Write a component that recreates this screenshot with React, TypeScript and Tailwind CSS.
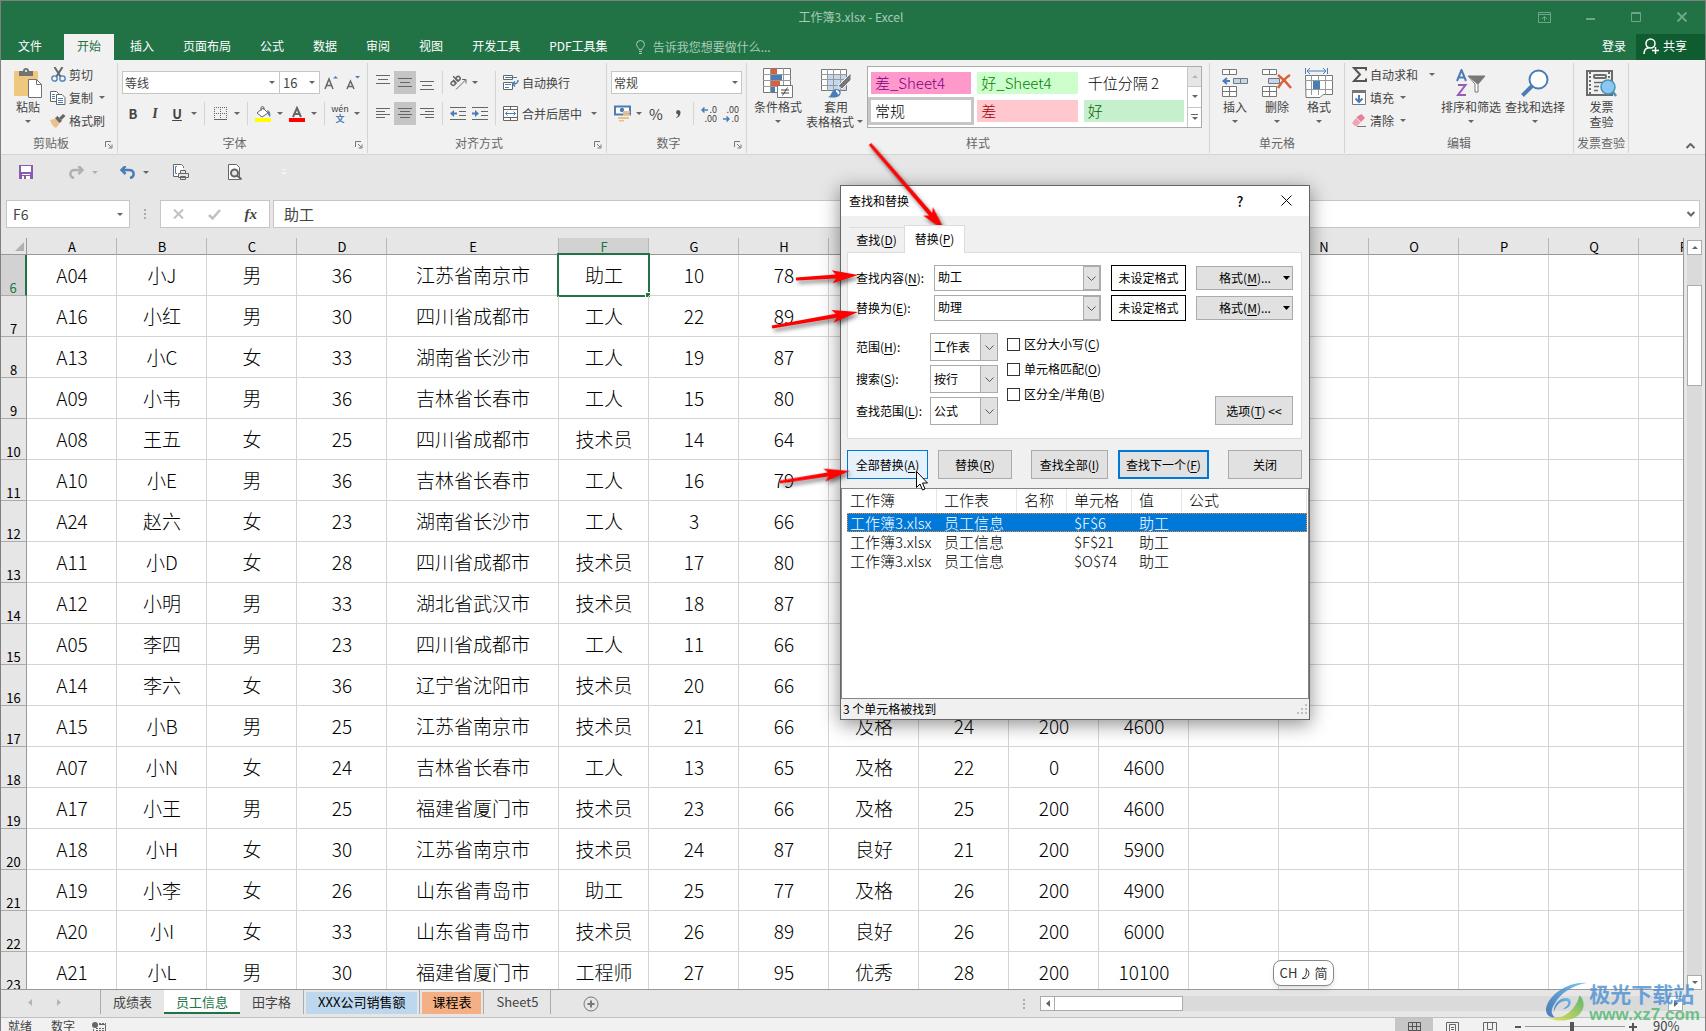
import { useState } from "react";
import type { ReactNode } from "react";

const MENU_TABS = [
  "开始",
  "插入",
  "页面布局",
  "公式",
  "数据",
  "审阅",
  "视图",
  "开发工具",
  "PDF工具集",
];

const COLUMNS = [
  "A", "B", "C", "D", "E", "F", "G", "H", "I",
  "J", "K", "L", "M", "N", "O", "P", "Q", "R",
];

const FIRST_ROW = 6;

const ROWS: string[][] = [
  ["A04", "小J", "男", "36", "江苏省南京市", "助工", "10", "78"],
  ["A16", "小红", "男", "30", "四川省成都市", "工人", "22", "89"],
  ["A13", "小C", "女", "33", "湖南省长沙市", "工人", "19", "87"],
  ["A09", "小韦", "男", "36", "吉林省长春市", "工人", "15", "80"],
  ["A08", "王五", "女", "25", "四川省成都市", "技术员", "14", "64"],
  ["A10", "小E", "男", "36", "吉林省长春市", "工人", "16", "79"],
  ["A24", "赵六", "女", "23", "湖南省长沙市", "工人", "3", "66"],
  ["A11", "小D", "女", "28", "四川省成都市", "技术员", "17", "80"],
  ["A12", "小明", "男", "33", "湖北省武汉市", "技术员", "18", "87"],
  ["A05", "李四", "男", "23", "四川省成都市", "工人", "11", "66"],
  ["A14", "李六", "女", "36", "辽宁省沈阳市", "技术员", "20", "66"],
  ["A15", "小B", "男", "25", "江苏省南京市", "技术员", "21", "66", "及格", "24", "200", "4600"],
  ["A07", "小N", "女", "24", "吉林省长春市", "工人", "13", "65", "及格", "22", "0", "4600"],
  ["A17", "小王", "男", "25", "福建省厦门市", "技术员", "23", "66", "及格", "25", "200", "4600"],
  ["A18", "小H", "女", "30", "江苏省南京市", "技术员", "24", "87", "良好", "21", "200", "5900"],
  ["A19", "小李", "女", "26", "山东省青岛市", "助工", "25", "77", "及格", "26", "200", "4900"],
  ["A20", "小I", "女", "33", "山东省青岛市", "技术员", "26", "89", "良好", "26", "200", "6000"],
  ["A21", "小L", "男", "30", "福建省厦门市", "工程师", "27", "95", "优秀", "28", "200", "10100"],
];

const RESULTS = [
  ["工作簿3.xlsx", "员工信息", "", "$F$6", "助工", ""],
  ["工作簿3.xlsx", "员工信息", "", "$F$21", "助工", ""],
  ["工作簿3.xlsx", "员工信息", "", "$O$74", "助工", ""],
];

const RESULT_COLUMNS = [
  { name: "工作簿", width: "w-[90px]" },
  { name: "工作表", width: "w-20" },
  { name: "名称", width: "w-[50px]" },
  { name: "单元格", width: "w-[65px]" },
  { name: "值", width: "w-[50px]" },
  { name: "公式", width: "w-[125px]" },
];

// Small shared pieces

function Caret({ className = "text-[#666]" }: { className?: string }) {
  return (
    <span className={`flex w-3 shrink-0 justify-center ${className}`}>
      <svg width="6" height="3" viewBox="0 0 6 3" fill="currentColor">
        <path d="M0 0h6L3 3z" />
      </svg>
    </span>
  );
}

function Sep() {
  return <span className="mx-1 w-px shrink-0 self-stretch bg-[#d4d4d4]" />;
}

function Tool({
  label,
  active,
  children,
}: {
  label: string;
  active?: boolean;
  children: ReactNode;
}) {
  return (
    <button
      type="button"
      aria-label={label}
      className={`flex h-[23px] w-[22px] shrink-0 items-center justify-center ${active ? "bg-[#c5c5c5]" : ""}`}
    >
      {children}
    </button>
  );
}

function SmallButton({
  icon,
  label,
  caret,
}: {
  icon: ReactNode;
  label: string;
  caret?: boolean;
}) {
  return (
    <button type="button" className="flex h-[23px] items-center gap-[3px]">
      <span className="flex w-4 justify-center">{icon}</span>
      <span>{label}</span>
      {caret && <Caret />}
    </button>
  );
}

function BigButton({
  icon,
  lines,
  width,
  caret = "below",
}: {
  icon: ReactNode;
  lines: string[];
  width: string;
  caret?: "below" | "inline" | "none";
}) {
  return (
    <button
      type="button"
      className={`flex shrink-0 flex-col items-center pt-1 leading-[15px] whitespace-nowrap ${width}`}
    >
      <span className="flex h-8 items-center">{icon}</span>
      {lines.map((line, i) => (
        <span key={line} className="flex items-center">
          {line}
          {caret === "inline" && i === lines.length - 1 && <Caret />}
        </span>
      ))}
      {caret === "below" && (
        <span className="flex h-[15px] items-center">
          <Caret />
        </span>
      )}
    </button>
  );
}

function Group({
  label,
  width,
  launcher,
  children,
}: {
  label: string;
  width: string;
  launcher?: boolean;
  children: ReactNode;
}) {
  return (
    <section className={`flex shrink-0 flex-col border-r border-[#d4d4d4] ${width}`}>
      <div className="flex h-[70px]">{children}</div>
      <div className="flex h-5 items-center text-[#666]">
        <span className="flex-1 text-center">{label}</span>
        {launcher && (
          <button type="button" aria-label={`${label}设置`} className="w-4 pt-1 pl-1">
            <svg width="8" height="8" viewBox="0 0 8 8" fill="none" stroke="#777">
              <path d="M.5 6V.5H6M3 3l3 3M7 3.500V7H3.500" />
            </svg>
          </button>
        )}
      </div>
    </section>
  );
}

function Lines({ rows }: { rows: [number, number, number][] }) {
  return (
    <svg width="14" height="15" viewBox="0 0 14 15" stroke="#666">
      {rows.map(([y, x1, x2]) => (
        <path key={y} d={`M${x1} ${y}.5H${x2}`} />
      ))}
    </svg>
  );
}

// Icons

function PasteIcon() {
  return (
    <svg width="28" height="30" viewBox="0 0 28 30">
      <rect y="3" width="24" height="25" rx="1" fill="#edc87e" />
      <path d="M5 3h4a3 3 0 0 1 6 0h4v5H5z" fill="#737373" />
      <circle cx="12" cy="3" r="1" fill="#fff" />
      <path d="M14.500 11.500h8l5 5v13h-13z" fill="#fff" stroke="#737373" />
      <path d="M22.500 11.500v5h5" fill="none" stroke="#737373" />
    </svg>
  );
}

function CutIcon() {
  return (
    <svg width="15" height="15" viewBox="0 0 15 15" fill="none">
      <path d="M3.500 0l6 9.500M11.500 0l-6 9.500" stroke="#666" strokeWidth="2" />
      <circle cx="3.500" cy="11.500" r="2.700" stroke="#4a7db5" strokeWidth="1.300" />
      <circle cx="11.500" cy="11.500" r="2.700" stroke="#4a7db5" strokeWidth="1.300" />
    </svg>
  );
}

function CopyIcon() {
  return (
    <svg width="16" height="14" viewBox="0 0 16 14" fill="#fff" stroke="#666">
      <path d="M.5.5h6l2 2v8h-8z" />
      <path d="M6.500 3.500h5.500l3 3v7H6.500z" />
      <path d="M2 3.500h3M2 5.500h3M2 7.500h3M8 7.500h5M8 9.500h5M8 11.500h5" stroke="#4a7db5" />
    </svg>
  );
}

function BrushIcon() {
  return (
    <svg width="16" height="14" viewBox="0 0 16 14">
      <path d="M0 6l6-1.500L10 9 6 14C4 13 1 10 0 6z" fill="#edc087" />
      <path d="M5 4l2.500-2L12 7 9.500 9z" fill="#666" />
      <path d="M9 4l4-4 2.500 2-4 4z" fill="#666" />
    </svg>
  );
}

function BordersIcon() {
  return (
    <svg width="13" height="13" viewBox="0 0 13 13" fill="none" stroke="#666">
      <path d="M.5 0v11M6.500 0v11M12.500 0v11M0 .5h13M0 6.500h13" strokeDasharray="1 1" />
      <path d="M0 12.500h13" />
    </svg>
  );
}

function FillIcon() {
  return (
    <svg width="16" height="16" viewBox="0 0 16 16">
      <path d="M2 7l6-5 5 5-6 4z" fill="#fff" stroke="#666" />
      <path d="M6 5V2a1.500 1.500 0 0 1 3 0v2" fill="none" stroke="#666" />
      <path d="M12 4c3 1 4 4 3 7-1-1-2-2-2-4z" fill="#4a7db5" />
      <path d="M0 12h16v4H0z" fill="#ff0" />
    </svg>
  );
}

function OrientationIcon() {
  return (
    <svg width="17" height="15" viewBox="0 0 17 15" fill="none" stroke="#666">
      <g transform="rotate(-45 6 7)" strokeWidth="1.500">
        <circle cx="3" cy="6" r="2" />
        <path d="M5.500 3.500v5M8 1v7.500" />
        <circle cx="10" cy="6" r="2" />
      </g>
      <path d="M6 14.500L15.500 5M12 4.500h4v4" />
    </svg>
  );
}

function IndentIcon({ right }: { right?: boolean }) {
  return (
    <svg width="16" height="14" viewBox="0 0 16 14" stroke="#666">
      <path d="M0 .5h16M9 4.500h7M9 8.500h7M0 12.500h16" />
      {right ? (
        <path d="M0 5.500h3V3l4 3.500L3 10V7.500H0z" fill="#4a7db5" stroke="none" />
      ) : (
        <path d="M7 5.500H4V3L0 6.500 4 10V7.500h3z" fill="#4a7db5" stroke="none" />
      )}
    </svg>
  );
}

function WrapIcon() {
  return (
    <svg width="16" height="16" viewBox="0 0 16 16" fill="none" stroke="#666">
      <path d="M.5.5h9v4h-9zM.5 7.500h9v7h-9z" fill="#fff" />
      <path d="M2 2.500h12M2 9.500h6M2 12.500h4" stroke="#4a7db5" />
      <path d="M15 5c0 3-1 4-5 4M12 6.500L9.500 9l2.500 2.500" stroke="#4a7db5" strokeWidth="1.500" />
    </svg>
  );
}

function MergeIcon() {
  return (
    <svg width="15" height="15" viewBox="0 0 15 15" fill="#fff" stroke="#666">
      <path d="M.5.5h14v14H.5zM0 3.500h15M0 11.500h15M7.500 0v3.500M7.500 11.500V15" />
      <path d="M2.500 7.500h10M4.500 5.500l-2 2 2 2M10.500 5.500l2 2-2 2" fill="none" stroke="#4a7db5" />
    </svg>
  );
}

function MoneyIcon() {
  return (
    <svg width="17" height="17" viewBox="0 0 17 17">
      <path d="M1 1.500h15v8H1z" fill="#fff" stroke="#4a7db5" strokeWidth="2" />
      <circle cx="8" cy="5" r="2.200" fill="#4a7db5" />
      <path d="M9 6h7v2H9zM9 9h7v2H9zM4 12h7v2H4zM10 12h5v2h-5zM5 15h5v1.500H5z" fill="#edc087" />
    </svg>
  );
}

function DecimalIcon({ more }: { more?: boolean }) {
  return (
    <span className="relative flex w-4 flex-col text-right text-[9px] leading-[9px]">
      <span>{more ? ".0" : ".00"}</span>
      <span>{more ? ".00" : ".0"}</span>
      <svg width="7" height="18" viewBox="0 0 7 18" className="absolute top-0 left-0" fill="none" stroke="#4a7db5" strokeWidth="1.500">
        {more ? (
          <path d="M7 5H1M3.500 2.500L1 5l2.500 2.500" />
        ) : (
          <path d="M0 14h6M3.500 11.500L6 14l-2.500 2.500" />
        )}
      </svg>
    </span>
  );
}

function ConditionalIcon() {
  return (
    <svg width="30" height="30" viewBox="0 0 30 30">
      <path d="M.5.5h27v24H.5z" fill="#fff" stroke="#777" />
      <path d="M0 6.500h28M0 12.500h28M0 18.500h28M7.500 0v25M20.500 0v25" stroke="#999" fill="none" />
      <path d="M8 1h6v5H8zM8 13h9v5H8z" fill="#d9603b" />
      <path d="M8 7h11v5H8zM8 19h4v5H8z" fill="#4a7db5" />
      <path d="M14.500 17.500h15v12h-15z" fill="#fff" stroke="#777" />
      <path d="M18 22h8M18 25h8M24.500 19.500l-5 8" stroke="#444" fill="none" />
    </svg>
  );
}

function TableStyleIcon() {
  return (
    <svg width="30" height="29" viewBox="0 0 30 29">
      <path d="M.5.5h25v21H.5z" fill="#fff" stroke="#777" />
      <path d="M7 6h18v15H7z" fill="#c3d7ee" />
      <path d="M0 5.500h26M0 10.500h26M0 16.500h26M6.500 0v22M12.500 0v22M19.500 0v22" stroke="#999" fill="none" />
      <path d="M30 4v7l-9 9-4-3z" fill="#777" stroke="#f1f1f1" />
      <path d="M7 28c4-1 3-7 8-8 4 0 6 3 4 6-2 3-8 3-12 2z" fill="#4a7db5" />
      <path d="M15 22c2 0 3 2 2 3" stroke="#fff" fill="none" strokeWidth="2" />
    </svg>
  );
}

function InsertCellsIcon() {
  return (
    <svg width="27" height="29" viewBox="0 0 27 29" fill="#fff" stroke="#777">
      <path d="M.5.500h14v5H.5zM7.500.5v5M.5 17.500h14v10H.5zM7.500 17.500v10M.5 22.500h14" />
      <path d="M11.500 9.500h14v5h-14zM18.500 9.500v5" fill="#c3d7ee" />
      <path d="M8 12H2M5 9l-3.500 3L5 15" fill="none" stroke="#4a7db5" strokeWidth="2" />
    </svg>
  );
}

function DeleteCellsIcon() {
  return (
    <svg width="30" height="29" viewBox="0 0 30 29" fill="#fff" stroke="#777">
      <path d="M.5.500h14v5H.5zM7.500.5v5M.5 17.500h14v10H.5zM7.500 17.500v10M.5 22.500h14" />
      <path d="M6.500 9.500h11v5h-11z" fill="#c3d7ee" />
      <path d="M16 6c4 3 9 8 13 13M28 6c-5 3-9 8-12 13" fill="none" stroke="#d9603b" strokeWidth="2.500" />
    </svg>
  );
}

function FormatCellsIcon() {
  return (
    <svg width="28" height="31" viewBox="0 0 28 31" fill="#fff" stroke="#777">
      <path d="M.5 7.500h27v19H18l-3 3H1z" />
      <path d="M6.500 7v20M20.500 7v20M0 12.500h28M0 21.500h28M13.500 7v5M13.500 22v5" fill="none" stroke="#999" />
      <path d="M8 13h7v8H8z" fill="#4a7db5" stroke="none" />
      <path d="M.5 0v6M22.500 0v6M2 3h19M5 0L2 3l3 3M18 0l3 3-3 3" fill="none" stroke="#4a7db5" />
    </svg>
  );
}

function SigmaIcon() {
  return (
    <svg width="15" height="15" viewBox="0 0 15 15" fill="none" stroke="#555" strokeWidth="2">
      <path d="M14 3.500V1H2l6 6.500L2 14h12v-2.500" />
    </svg>
  );
}

function FillDownIcon() {
  return (
    <svg width="14" height="15" viewBox="0 0 14 15">
      <path d="M.5.500h13v14H.5z" fill="#fff" stroke="#777" />
      <path d="M0 0h14v3H0z" fill="#777" />
      <path d="M7 5v7M3.500 8.500L7 12l3.500-3.500" fill="none" stroke="#4a7db5" strokeWidth="2" />
    </svg>
  );
}

function EraserIcon() {
  return (
    <svg width="15" height="13" viewBox="0 0 15 13">
      <path d="M6 2l3.500-2L13 4 9 8 4.500 3.500z" fill="#e87f93" />
      <path d="M4 4l4.500 4.500L5 12H3L0 9z" fill="#f0a3b1" />
      <path d="M5 12.500h9" stroke="#777" />
    </svg>
  );
}

function SortFilterIcon() {
  return (
    <svg width="30" height="28" viewBox="0 0 30 28" fill="none">
      <path d="M1 12L5.500 1 10 12M2.500 8.500h6" stroke="#4a7db5" strokeWidth="2" />
      <path d="M2 16h7.500L2 26h8" stroke="#9a5bb5" strokeWidth="2" />
      <path d="M12 7h17l-7 8v8h-3v-8z" fill="#fff" stroke="#777" />
      <path d="M12 7h17l-7 8h-1z" fill="#777" />
    </svg>
  );
}

function FindIcon() {
  return (
    <svg width="28" height="28" viewBox="0 0 28 28" fill="none" stroke="#4a7db5">
      <circle cx="17.500" cy="10.500" r="9" fill="#fff" strokeWidth="2" />
      <path d="M11 17L1.500 26.500" strokeWidth="4" />
    </svg>
  );
}

function InvoiceIcon() {
  return (
    <svg width="31" height="27" viewBox="0 0 31 27" fill="none" stroke="#6b6b6b">
      <path d="M1 1h25v24H1z" strokeWidth="2" />
      <path d="M4 2v22M23 2v22" strokeDasharray="2 2" strokeWidth="2" />
      <rect x="8" y="5" width="12" height="3" rx="1" strokeWidth="2" />
      <path d="M8 12.500h10M8 16.500h5M8 20.500h4" strokeWidth="1.500" />
      <circle cx="22" cy="17" r="7" fill="#8cc6f5" stroke="#4595b8" strokeWidth="1.500" />
      <path d="M27 22l3 4" stroke="#4595b8" strokeWidth="2.500" />
    </svg>
  );
}

// Top of the window

function TitleBar() {
  return (
    <header className="flex h-[33px] items-center bg-[#217346] pb-px text-[#a8cbb7]">
      <div className="w-[196px]" />
      <h1 className="flex-1 text-center">工作簿3.xlsx - Excel</h1>
      <div className="flex w-[200px] items-center justify-end text-[#6fa688]">
        <button type="button" aria-label="功能区显示选项" className="flex w-[46px] justify-center">
          <svg width="13" height="11" viewBox="0 0 13 11" fill="none" stroke="currentColor">
            <path d="M.5.500h12v10H.5zM0 2.500h13M6.500 9V4.500M4 7l2.500-2.500L9 7" />
          </svg>
        </button>
        <button type="button" aria-label="最小化" className="flex w-[46px] justify-center">
          <svg width="9" height="6" viewBox="0 0 9 6" stroke="currentColor" strokeWidth="2">
            <path d="M0 5h9" />
          </svg>
        </button>
        <button type="button" aria-label="最大化" className="flex w-[46px] justify-center">
          <svg width="10" height="10" viewBox="0 0 10 10" fill="none" stroke="currentColor">
            <path d="M.5.500h9v9h-9zM0 1.500h10" />
          </svg>
        </button>
        <button type="button" aria-label="关闭窗口" className="flex w-[46px] justify-center">
          <svg width="10" height="10" viewBox="0 0 10 10" stroke="currentColor" strokeWidth="2">
            <path d="M.5.500l9 9M9.500.5l-9 9" />
          </svg>
        </button>
      </div>
    </header>
  );
}

function MenuTabs() {
  return (
    <nav className="flex h-[26px] items-stretch gap-[3px] bg-[#217346] pl-1 text-white">
      <button type="button" className="mr-[6px] px-[13px] pb-[2px]">
        文件
      </button>
      {MENU_TABS.map((tab, i) => (
        <button
          key={tab}
          type="button"
          className={`px-[13px] pb-[2px] ${i === 0 ? "bg-[#f1f1f1] text-[#217346]" : ""}`}
        >
          {tab}
        </button>
      ))}
      <button type="button" className="flex items-center gap-2 px-3 pb-px text-[#a8cbb7]">
        <svg width="9" height="14" viewBox="0 0 9 14" fill="none" stroke="currentColor">
          <path d="M3 9.500C3 7.500.5 7 .5 4.500a4 4 0 0 1 8 0C8.500 7 6 7.500 6 9.500zM3 11.500h3M3 13.500h3" />
        </svg>
        告诉我您想要做什么...
      </button>
      <div className="flex-1" />
      <button type="button" className="px-[7px] pb-[2px]">
        登录
      </button>
      <button type="button" className="flex w-[69px] items-center gap-1 bg-[#0e5c2f] pb-[2px] pl-[7px]">
        <svg width="16" height="16" viewBox="0 0 16 16" fill="none" stroke="white" strokeWidth="1.500">
          <circle cx="7.500" cy="5.500" r="4.500" />
          <path d="M1 16c0-3.500 2-6 5-6.500M12.500 9v7M9 12.500h7" />
        </svg>
        共享
      </button>
    </nav>
  );
}

function StyleCell({ label, className }: { label: string; className: string }) {
  return (
    <button
      type="button"
      className={`h-[22px] px-1 pb-px text-left text-[15px] leading-[20px] font-light ${className}`}
    >
      {label}
    </button>
  );
}

function Ribbon() {
  return (
    <div className="flex h-[95px] items-start border-b border-[#d4d4d4] bg-[#f1f1f1] pt-[3px] text-[#444]">
      <Group label="剪贴板" width="w-[117px]" launcher>
        <div className="flex gap-1 pl-[9px]">
          <BigButton icon={<PasteIcon />} lines={["粘贴"]} width="w-9" />
          <div>
            <SmallButton icon={<CutIcon />} label="剪切" />
            <SmallButton icon={<CopyIcon />} label="复制" caret />
            <SmallButton icon={<BrushIcon />} label="格式刷" />
          </div>
        </div>
      </Group>

      <Group label="字体" width="w-[250px]" launcher>
        <div className="flex flex-col gap-2 pt-2 pl-1">
          <div className="flex h-[23px] items-center">
            <button
              type="button"
              className="flex h-[23px] w-[158px] items-center justify-between border border-[#c6c6c6] bg-white pr-px pl-[2px]"
            >
              等线
              <Caret />
            </button>
            <button
              type="button"
              className="flex h-[23px] w-10 items-center justify-between border border-l-0 border-[#c6c6c6] bg-white pr-px pl-[3px] text-[13px]"
            >
              16
              <Caret />
            </button>
            <Tool label="增大字号">
              <svg width="14" height="15" viewBox="0 0 14 15" fill="none">
                <path d="M1 14L5 4l4 10M2.500 10.500h5" stroke="#666" strokeWidth="1.500" />
                <path d="M9 3.500L11.500 1 14 3.500z" fill="#4a7db5" />
              </svg>
            </Tool>
            <Tool label="减小字号">
              <svg width="14" height="15" viewBox="0 0 14 15" fill="none">
                <path d="M1 14l3.500-8L8 14M2.500 11.500h4" stroke="#666" strokeWidth="1.500" />
                <path d="M9 1h5l-2.500 2.500z" fill="#4a7db5" />
              </svg>
            </Tool>
          </div>
          <div className="flex h-[23px] items-center">
            <Tool label="加粗">
              <b className="text-[13px]">B</b>
            </Tool>
            <Tool label="倾斜">
              <b className="font-serif text-[14px] italic">I</b>
            </Tool>
            <Tool label="下划线">
              <b className="text-[13px] underline">U</b>
            </Tool>
            <Caret />
            <Sep />
            <Tool label="边框">
              <BordersIcon />
            </Tool>
            <Caret />
            <Sep />
            <Tool label="填充颜色">
              <FillIcon />
            </Tool>
            <Caret />
            <Tool label="字体颜色">
              <svg width="16" height="16" viewBox="0 0 16 16" fill="none">
                <path d="M4 11L8 2l4 9M5.500 8h5" stroke="#666" strokeWidth="2" />
                <path d="M0 12h16v4H0z" fill="red" />
              </svg>
            </Tool>
            <Caret />
            <Sep />
            <Tool label="拼音">
              <span className="flex flex-col items-center text-[9px] leading-[10px]">
                <span>wén</span>
                <span className="font-bold text-[#4a7db5]">文</span>
              </span>
            </Tool>
            <Caret />
          </div>
        </div>
      </Group>

      <Group label="对齐方式" width="w-[239px]" launcher>
        <div className="flex h-[62px] pt-2 pl-1">
          <div className="flex w-[119px] flex-col gap-2">
            <div className="flex h-[23px] items-center">
              <Tool label="顶端对齐">
                <Lines rows={[[0, 0, 14], [4, 2, 12], [8, 0, 14]]} />
              </Tool>
              <Tool label="垂直居中" active>
                <Lines rows={[[3, 0, 14], [7, 2, 12], [11, 0, 14]]} />
              </Tool>
              <Tool label="底端对齐">
                <Lines rows={[[6, 0, 14], [10, 2, 12], [14, 0, 14]]} />
              </Tool>
              <Sep />
              <Tool label="方向">
                <OrientationIcon />
              </Tool>
              <Caret />
            </div>
            <div className="flex h-[23px] items-center">
              <Tool label="左对齐">
                <Lines rows={[[2, 0, 14], [5, 0, 9], [8, 0, 14], [11, 0, 9]]} />
              </Tool>
              <Tool label="居中" active>
                <Lines rows={[[2, 0, 14], [5, 2, 12], [8, 0, 14], [11, 2, 12]]} />
              </Tool>
              <Tool label="右对齐">
                <Lines rows={[[2, 0, 14], [5, 5, 14], [8, 0, 14], [11, 5, 14]]} />
              </Tool>
              <Sep />
              <Tool label="减少缩进量">
                <IndentIcon />
              </Tool>
              <Tool label="增加缩进量">
                <IndentIcon right />
              </Tool>
            </div>
          </div>
          <Sep />
          <div className="flex flex-col gap-2 pl-[3px]">
            <SmallButton icon={<WrapIcon />} label="自动换行" />
            <button type="button" className="flex h-[23px] items-center gap-[3px]">
              <span className="flex w-4">
                <MergeIcon />
              </span>
              <span className="pr-[3px]">合并后居中</span>
              <Caret />
            </button>
          </div>
        </div>
      </Group>

      <Group label="数字" width="w-[140px]" launcher>
        <div className="flex flex-1 flex-col gap-2 px-1 pt-2">
          <button
            type="button"
            className="flex h-[23px] items-center justify-between border border-[#c6c6c6] bg-white pl-[2px]"
          >
            常规
            <Caret />
          </button>
          <div className="flex h-[23px] items-center">
            <Tool label="会计数字格式">
              <MoneyIcon />
            </Tool>
            <Caret />
            <Tool label="百分比样式">
              <span className="text-[15px]">%</span>
            </Tool>
            <Tool label="千位分隔样式">
              <svg width="6" height="8" viewBox="0 0 6 8" fill="#555">
                <path d="M1 7.500c2-1 2-2 2-3A2.200 2.200 0 1 1 5.500 2.500c0 3-2 5-4 5.500z" />
              </svg>
            </Tool>
            <Sep />
            <Tool label="增加小数位数">
              <DecimalIcon more />
            </Tool>
            <Tool label="减少小数位数">
              <DecimalIcon />
            </Tool>
          </div>
        </div>
      </Group>

      <Group label="样式" width="w-[463px]">
        <div className="flex pl-1">
          <BigButton icon={<ConditionalIcon />} lines={["条件格式"]} width="w-[54px]" />
          <BigButton
            icon={<TableStyleIcon />}
            lines={["套用", "表格格式"]}
            width="w-[62px]"
            caret="inline"
          />
          <div className="mt-[3px] flex h-[62px] w-[335px] border border-[#ababab] bg-white text-black">
            <div className="grid flex-1 grid-cols-3 content-center gap-x-[6px] gap-y-[6px] px-[3px]">
              <StyleCell label="差_Sheet4" className="bg-[#ff99cc] text-[#800080]" />
              <StyleCell label="好_Sheet4" className="bg-[#ccffcc] text-[#008000]" />
              <StyleCell label="千位分隔 2" className="" />
              <StyleCell label="常规" className="outline-3 outline-[#c6c6c6]" />
              <StyleCell label="差" className="bg-[#ffc7ce] text-[#9c0006]" />
              <StyleCell label="好" className="bg-[#c6efce] text-[#006100]" />
            </div>
            <div className="flex w-[14px] flex-col divide-y divide-[#c6c6c6] border-l border-[#c6c6c6]">
              <button type="button" aria-label="上一行样式" className="flex flex-1 items-center justify-center bg-[#e6e6e6]">
                <Caret className="rotate-180 text-[#b5b5b5]" />
              </button>
              <button type="button" aria-label="下一行样式" className="flex flex-1 items-center justify-center">
                <Caret />
              </button>
              <button type="button" aria-label="更多样式" className="flex flex-1 flex-col items-center justify-center gap-[2px]">
                <span className="h-px w-[7px] bg-[#666]" />
                <Caret />
              </button>
            </div>
          </div>
        </div>
      </Group>

      <Group label="单元格" width="w-[135px]">
        <div className="flex pl-1">
          <BigButton icon={<InsertCellsIcon />} lines={["插入"]} width="w-[42px]" />
          <BigButton icon={<DeleteCellsIcon />} lines={["删除"]} width="w-[42px]" />
          <BigButton icon={<FormatCellsIcon />} lines={["格式"]} width="w-[42px]" />
        </div>
      </Group>

      <Group label="编辑" width="w-[229px]">
        <div className="flex pl-[6px]">
          <div className="w-[88px]">
            <button type="button" className="flex h-[23px] w-full items-center gap-[3px] pr-px">
              <span className="flex w-4 justify-center">
                <SigmaIcon />
              </span>
              <span className="flex-1 text-left">自动求和</span>
              <Caret />
            </button>
            <SmallButton icon={<FillDownIcon />} label="填充" caret />
            <SmallButton icon={<EraserIcon />} label="清除" caret />
          </div>
          <BigButton icon={<SortFilterIcon />} lines={["排序和筛选"]} width="w-16" />
          <BigButton icon={<FindIcon />} lines={["查找和选择"]} width="w-16" />
        </div>
      </Group>

      <Group label="发票查验" width="w-[55px]">
        <BigButton icon={<InvoiceIcon />} lines={["发票", "查验"]} width="w-[55px]" caret="none" />
      </Group>

      <div className="flex flex-1 items-end justify-end self-stretch pr-[10px] pb-[5px]">
        <button type="button" aria-label="折叠功能区">
          <svg width="9" height="6" viewBox="0 0 9 6" fill="none" stroke="#666" strokeWidth="2">
            <path d="M.5 5l4-4 4 4" />
          </svg>
        </button>
      </div>
    </div>
  );
}

function QuickAccess() {
  return (
    <div className="flex h-[45px] shrink-0 items-center pb-[11px] pl-[18px]">
      <button type="button" aria-label="保存" className="w-[50px]">
        <svg width="14" height="14" viewBox="0 0 14 14">
          <path d="M0 0h14v14H0z" fill="#8a5bb0" />
          <path d="M2 1h10v6H2zM3 9h8v5H3z" fill="#fff" />
          <path d="M5 11h2v3H5zM3 10h8v1H3z" fill="#8a5bb0" />
        </svg>
      </button>
      <button type="button" aria-label="恢复" className="flex w-[51px] items-center gap-[5px] text-[#b1b1b1]">
        <svg width="15" height="13" viewBox="0 0 15 13" fill="none" stroke="currentColor" strokeWidth="2.500">
          <path d="M5 12C0 11 0 4 6 4h7M9.500 0l4 4-4 4" />
        </svg>
        <Caret className="text-[#b1b1b1]" />
      </button>
      <button type="button" aria-label="撤消" className="flex w-[53px] items-center gap-[5px] text-[#4a7db5]">
        <svg width="15" height="13" viewBox="0 0 15 13" fill="none" stroke="currentColor" strokeWidth="2.500">
          <path d="M10 12c5-1 5-8-1-8H2M5.500 0l-4 4 4 4" />
        </svg>
        <Caret />
      </button>
      <button type="button" aria-label="快速打印" className="w-[55px]">
        <svg width="16" height="16" viewBox="0 0 16 16" fill="#fff" stroke="#666">
          <path d="M10.500 4V2.500l-2-2h-8v12h5" />
          <path d="M4 2.500H2.500v7H4" stroke="#4a7db5" fill="none" />
          <path d="M7.500 6.500h5v3h-5zM5.500 9.500h10v4h-10zM7.500 12.500h5v3h-5z" fill="#e6e6e6" />
        </svg>
      </button>
      <button type="button" aria-label="打印预览" className="w-[50px]">
        <svg width="14" height="16" viewBox="0 0 14 16" fill="none" stroke="#666">
          <path d="M.5.500h8l3 3v12H.5z" fill="#fff" />
          <circle cx="6.500" cy="9" r="3.500" fill="#e6e6e6" strokeWidth="2" />
          <path d="M9 11.500l4.500 4" strokeWidth="2" />
        </svg>
      </button>
      <button type="button" aria-label="自定义快速访问工具栏" className="flex flex-col items-center gap-[2px]">
        <span className="h-px w-[5px] bg-[#f5f5f5]" />
        <Caret className="text-[#f5f5f5]" />
      </button>
    </div>
  );
}

function FormulaBar() {
  return (
    <div className="flex h-[28px] shrink-0 items-stretch pr-[5px] pl-[5px] text-[#444]">
      <div className="flex w-[124px] items-center border border-[#c6c6c6] bg-white pr-[3px]">
        <input
          aria-label="名称框"
          defaultValue="F6"
          className="w-full min-w-0 bg-transparent pb-px pl-[6px] text-[14px] outline-none"
        />
        <Caret />
      </div>
      <div className="flex w-[30px] flex-col items-center justify-center gap-[2px]">
        <i className="h-[2px] w-[2px] bg-[#ababab]" />
        <i className="h-[2px] w-[2px] bg-[#ababab]" />
        <i className="h-[2px] w-[2px] bg-[#ababab]" />
      </div>
      <div className="mr-[3px] flex w-[110px] items-center justify-around border border-[#c6c6c6] bg-white">
        <button type="button" aria-label="取消">
          <svg width="11" height="10" viewBox="0 0 11 10" stroke="#c0c0c0" strokeWidth="2">
            <path d="M1 .5l9 9M10 .5l-9 9" />
          </svg>
        </button>
        <button type="button" aria-label="输入">
          <svg width="13" height="11" viewBox="0 0 13 11" fill="none" stroke="#c0c0c0" strokeWidth="2.500">
            <path d="M1 6l3.500 3.500L12 1" />
          </svg>
        </button>
        <button
          type="button"
          aria-label="插入函数"
          className="font-['Liberation_Serif',serif] text-[15px] leading-4 font-bold italic"
        >
          fx
        </button>
      </div>
      <div className="flex flex-1 items-center border border-[#c6c6c6] bg-white pr-1">
        <input
          aria-label="编辑栏"
          defaultValue="助工"
          className="w-full min-w-0 bg-transparent pb-px pl-[10px] text-[15px] outline-none"
        />
        <svg width="8" height="6" viewBox="0 0 8 6" fill="none" stroke="#666" strokeWidth="2">
          <path d="M.5 1L4 4.500 7.500 1" />
        </svg>
      </div>
    </div>
  );
}

// Worksheet

function Sheet() {
  return (
    <div className="flex min-h-0 flex-1 pt-[10px]">
      <div className="relative flex-1 overflow-hidden border-r border-b border-[#999]">
        <table className="w-max table-auto border-separate border-spacing-0 bg-white text-black">
          <thead>
            <tr className="h-[17px] bg-[#e6e6e6] text-[13px] leading-[15px]">
              <th className="w-[26px] border-r border-b border-[#999] p-0">
                <svg width="9" height="9" viewBox="0 0 9 9" className="mr-[2px] ml-auto" fill="#b1b1b1">
                  <path d="M9 0v9H0z" />
                </svg>
              </th>
              {COLUMNS.map((col) => (
                <th
                  key={col}
                  className={`border-r border-b border-r-[#b8b8b8] border-b-[#999] pt-px pr-0 pb-0 pl-px font-normal ${
                    col === "E" ? "w-[172px] min-w-[172px]" : "w-[90px] min-w-[90px]"
                  } ${col === "F" ? "bg-[#d2d2d2] text-[#217346]" : ""}`}
                >
                  {col}
                </th>
              ))}
            </tr>
          </thead>
          <tbody>
            {ROWS.map((row, r) => (
              <tr key={row[0]} className="h-[41px]">
                <th
                  className={`min-w-[26px] border-b border-b-[#ababab] p-0 align-bottom text-[13px] leading-[14px] font-normal ${
                    r === 0
                      ? "border-r-2 border-r-[#217346] bg-[#d2d2d2] text-[#217346]"
                      : "border-r border-r-[#999] bg-[#e6e6e6]"
                  }`}
                >
                  {FIRST_ROW + r}
                </th>
                {COLUMNS.map((col, c) => (
                  <td
                    key={col}
                    className="relative border-r border-b border-[#d4d4d4] py-0 pr-0 pl-px text-center text-[19px] leading-6 font-light"
                  >
                    {row[c]}
                    {r === 0 && col === "F" && (
                      <span className="absolute -inset-[2px] border-2 border-[#217346]">
                        <i className="absolute -right-[3px] -bottom-[3px] h-[6px] w-[6px] border border-white bg-[#217346]" />
                      </span>
                    )}
                  </td>
                ))}
              </tr>
            ))}
          </tbody>
        </table>
      </div>
      <div className="flex w-[21px] shrink-0 flex-col pt-[2px] pl-[3px]">
        <button type="button" aria-label="向上滚动" className="flex h-[15px] w-[15px] items-center justify-center border border-[#ababab] bg-white">
          <Caret className="rotate-180 text-[#666]" />
        </button>
        <div className="w-[15px] flex-1 bg-[#dadada] pt-[30px]">
          <div className="h-[101px] border border-[#ababab] bg-white" />
        </div>
        <button type="button" aria-label="向下滚动" className="flex h-[15px] w-[15px] items-center justify-center border border-[#ababab] bg-white">
          <Caret />
        </button>
      </div>
    </div>
  );
}

function SheetTabs() {
  return (
    <div className="flex h-[28px] shrink-0 items-start border-b border-[#c0c0c0] text-[13px] text-[#444]">
      <div className="flex h-6 w-[99px] items-center gap-[25px] pl-[27px]">
        <button type="button" aria-label="上一个工作表">
          <svg width="4" height="7" viewBox="0 0 4 7" fill="#b5b5b5"><path d="M4 0v7L0 3.500z" /></svg>
        </button>
        <button type="button" aria-label="下一个工作表">
          <svg width="4" height="7" viewBox="0 0 4 7" fill="#b5b5b5"><path d="M0 0v7l4-3.500z" /></svg>
        </button>
      </div>
      <button type="button" className="h-6 border-l border-[#ababab] px-3 pb-px">成绩表</button>
      <button type="button" className="h-6 border-b-2 border-[#217346] bg-white px-3 pt-px text-[#217346]">
        员工信息
      </button>
      <button type="button" className="mr-[2px] h-6 border-r border-[#ababab] px-3 pb-px">田字格</button>
      <button type="button" className="mt-[2px] mr-[2px] h-[22px] bg-[#bdd7ee] px-3 pb-[3px] text-black">
        XXX公司销售额
      </button>
      <span className="mr-[2px] h-6 w-px bg-[#ababab]" />
      <button type="button" className="mt-[2px] mr-[2px] h-[22px] bg-[#f4b084] px-[10px] pb-[3px] text-black">
        课程表
      </button>
      <button type="button" className="h-6 border-x border-[#ababab] px-3 pb-px">Sheet5</button>
      <button type="button" aria-label="新工作表" className="flex h-7 w-20 items-center justify-center">
        <svg width="16" height="16" viewBox="0 0 16 16" fill="none" stroke="#777">
          <circle cx="8" cy="8" r="7" />
          <path d="M8 4.500v7M4.500 8h7" strokeWidth="2" />
        </svg>
      </button>
      <div className="flex-1" />
      <div className="flex w-[40%] items-center pt-[6px] pr-[22px]">
        <div className="mr-[15px] flex flex-col gap-[2px]">
          <i className="h-[2px] w-[2px] bg-[#ababab]" />
          <i className="h-[2px] w-[2px] bg-[#ababab]" />
          <i className="h-[2px] w-[2px] bg-[#ababab]" />
        </div>
        <button type="button" aria-label="向左滚动" className="flex h-[15px] w-[15px] items-center justify-center border border-[#ababab] bg-white">
          <svg width="4" height="7" viewBox="0 0 4 7" fill="#666"><path d="M4 0v7L0 3.500z" /></svg>
        </button>
        <div className="h-[15px] flex-1 bg-[#dadada]">
          <div className="h-full w-[128px] border border-l-0 border-[#ababab] bg-white" />
        </div>
        <button type="button" aria-label="向右滚动" className="flex h-[15px] w-[15px] items-center justify-center border border-[#ababab] bg-white">
          <svg width="4" height="7" viewBox="0 0 4 7" fill="#666"><path d="M0 0v7l4-3.500z" /></svg>
        </button>
      </div>
    </div>
  );
}

function StatusBar() {
  return (
    <footer className="flex h-[13px] shrink-0 items-start overflow-hidden bg-[#f1f1f1] pl-[7px] text-[#444]">
      <span className="w-[43px]">就绪</span>
      <span className="w-[41px]">数字</span>
      <svg width="14" height="13" viewBox="0 0 14 13" className="mt-1" fill="none" stroke="#666">
        <circle cx="3" cy="3" r="3" fill="#666" stroke="none" />
        <path d="M7 2.500h6.500v10h-12V7" />
        <path d="M7 1.500h7M4 6.500h8M4 8.500h8" strokeDasharray="2 1" />
      </svg>
      <div className="flex-1" />
      <button type="button" aria-label="普通" className="flex h-[22px] w-[38px] justify-center bg-[#c6c6c6] pt-1">
        <svg width="13" height="13" viewBox="0 0 13 13" fill="none" stroke="#555">
          <path d="M.5.500h12v12H.5zM4.500 0v13M8.500 0v13M0 4.500h13M0 8.500h13" />
        </svg>
      </button>
      <button type="button" aria-label="页面布局视图" className="flex w-[38px] justify-center pt-1">
        <svg width="13" height="13" viewBox="0 0 13 13" fill="none" stroke="#666">
          <path d="M.5.500h12v12H.5zM3.500 2.500h6v10h-6zM5 5.500h3M5 7.500h3" />
        </svg>
      </button>
      <button type="button" aria-label="分页预览" className="mr-[6px] flex w-[38px] justify-center pt-1">
        <svg width="14" height="13" viewBox="0 0 14 13" fill="none" stroke="#666">
          <path d="M.5.500h13v12H.5zM4.500 0v7.500h5V0" />
        </svg>
      </button>
      <button type="button" aria-label="缩小" className="mb-[3px] h-[2px] w-[6px] self-end bg-[#555]" />
      <span className="flex h-[9px] w-[108px] items-center justify-center self-end">
        <i className="h-px w-[45px] bg-[#999]" />
        <i className="h-[9px] w-1 bg-[#555]" />
        <i className="h-px w-[51px] bg-[#999]" />
      </span>
      <button type="button" aria-label="放大" className="self-end">
        <svg width="8" height="8" viewBox="0 0 8 8" stroke="#555" strokeWidth="2">
          <path d="M4 0v8M0 4h8" />
        </svg>
      </button>
      <span className="w-[68px] pl-4 text-[13px]">90%</span>
    </footer>
  );
}

// Find and replace dialog

function Chevron() {
  return (
    <svg width="9" height="5" viewBox="0 0 9 5" fill="none" stroke="#555">
      <path d="M.5.500l4 4 4-4" />
    </svg>
  );
}

function Key({ text, letter, tail = "" }: { text: string; letter: string; tail?: string }) {
  return (
    <>
      {text}(<u className="underline-offset-2">{letter}</u>){tail}
    </>
  );
}

function FindField({
  id,
  text,
  letter,
  value,
  onChange,
}: {
  id: string;
  text: string;
  letter: string;
  value: string;
  onChange: (value: string) => void;
}) {
  return (
    <div className="flex items-center">
      <label htmlFor={id} className="w-[78px]">
        <Key text={text} letter={letter} tail=":" />
      </label>
      <div className="mr-[10px] flex h-[26px] flex-1 border border-[#ababab] bg-white">
        <input
          id={id}
          value={value}
          onChange={(e) => onChange(e.target.value)}
          className="w-full min-w-0 pb-[2px] pl-[3px] outline-none"
        />
        <button
          type="button"
          aria-label={`${text}历史`}
          className="flex w-[17px] shrink-0 items-center justify-center border border-[#ababab] bg-[#e1e1e1]"
        >
          <Chevron />
        </button>
      </div>
      <output className="mr-[10px] flex h-[26px] w-[75px] items-center justify-center border border-black">
        未设定格式
      </output>
      <button
        type="button"
        className="flex h-6 w-[97px] items-center border border-[#ababab] bg-[#e1e1e1] pr-[2px]"
      >
        <span className="flex-1 pl-[10px]">
          <Key text="格式" letter="M" tail="..." />
        </span>
        <svg width="7" height="4" viewBox="0 0 7 4"><path d="M0 0h7L3.500 4z" /></svg>
      </button>
    </div>
  );
}

function OptionSelect({
  id,
  text,
  letter,
  options,
}: {
  id: string;
  text: string;
  letter: string;
  options: string[];
}) {
  return (
    <div className="flex items-center">
      <label htmlFor={id} className="w-[74px]">
        <Key text={text} letter={letter} tail=":" />
      </label>
      <div className="relative h-7 w-[68px]">
        <select
          id={id}
          className="h-full w-full appearance-none border border-[#ababab] bg-white pl-[3px] outline-none"
        >
          {options.map((o) => (
            <option key={o}>{o}</option>
          ))}
        </select>
        <span className="pointer-events-none absolute inset-y-0 right-0 flex w-[18px] items-center justify-center border border-[#ababab] bg-[#e1e1e1]">
          <Chevron />
        </span>
      </div>
    </div>
  );
}

function CheckOption({ text, letter }: { text: string; letter: string }) {
  return (
    <label className="flex items-center gap-1">
      <input type="checkbox" className="h-[13px] w-[13px] appearance-none border border-[#333] bg-white" />
      <span>
        <Key text={text} letter={letter} />
      </span>
    </label>
  );
}

function FindReplaceDialog() {
  const [find, setFind] = useState("助工");
  const [replace, setReplace] = useState("助理");
  const [selected, setSelected] = useState(0);

  return (
    <div
      role="dialog"
      aria-label="查找和替换"
      className="absolute top-[184px] left-[839px] flex w-[470px] flex-col border border-[#666] bg-[#f0f0f0] text-black shadow-[0_4px_18px_rgba(0,0,0,0.45)]"
    >
      <div className="flex h-[30px] items-center bg-white pb-px pl-2">
        <h2 className="flex-1">查找和替换</h2>
        <button type="button" aria-label="帮助" className="w-[46px] text-[14px] font-medium">
          ?
        </button>
        <button type="button" aria-label="关闭对话框" className="flex w-[46px] justify-center">
          <svg width="11" height="11" viewBox="0 0 11 11" stroke="#000">
            <path d="M.5.500l10 10M10.500.5l-10 10" />
          </svg>
        </button>
      </div>

      <div className="pt-[9px] pr-[7px] pl-[6px]">
        <div role="tablist" className="flex items-end pl-[2px]">
          <button
            role="tab"
            type="button"
            className="h-[25px] w-[55px] border-t border-[#dcdcdc]"
          >
            <Key text="查找" letter="D" />
          </button>
          <button
            role="tab"
            type="button"
            aria-selected
            className="relative z-10 -mb-px h-[28px] w-[61px] border border-b-0 border-[#dcdcdc] bg-white pb-px"
          >
            <Key text="替换" letter="P" />
          </button>
        </div>

        <div className="h-[187px] border border-[#dcdcdc] bg-white pt-3 pr-2 pl-2">
          <div className="flex flex-col gap-1">
            <FindField id="find" text="查找内容" letter="N" value={find} onChange={setFind} />
            <FindField id="replace" text="替换为" letter="E" value={replace} onChange={setReplace} />
          </div>
          <div className="flex pt-3">
            <div className="flex flex-col gap-1">
              <OptionSelect id="within" text="范围" letter="H" options={["工作表", "工作簿"]} />
              <OptionSelect id="search" text="搜索" letter="S" options={["按行", "按列"]} />
              <OptionSelect id="lookin" text="查找范围" letter="L" options={["公式"]} />
            </div>
            <div className="flex flex-1 flex-col gap-[9px] pt-[3px] pl-[9px]">
              <CheckOption text="区分大小写" letter="C" />
              <CheckOption text="单元格匹配" letter="O" />
              <CheckOption text="区分全/半角" letter="B" />
            </div>
            <button
              type="button"
              className="h-[29px] w-[78px] self-end border border-[#ababab] bg-[#e1e1e1]"
            >
              <Key text="选项" letter="T" tail=" <<" />
            </button>
          </div>
        </div>

        <div className="flex h-[49px] items-start pt-[11px]">
          <button type="button" className="mr-[10px] h-[29px] w-[81px] border border-[#0078d7] bg-[#e5f1fb]">
            <Key text="全部替换" letter="A" />
          </button>
          <button type="button" className="mr-[19px] h-[29px] w-[74px] border border-[#ababab] bg-[#e1e1e1]">
            <Key text="替换" letter="R" />
          </button>
          <button type="button" className="mr-[10px] h-[29px] w-[77px] border border-[#ababab] bg-[#e1e1e1]">
            <Key text="查找全部" letter="I" />
          </button>
          <button type="button" className="h-[29px] w-[91px] border-2 border-[#0078d7] bg-[#e1e1e1]">
            <Key text="查找下一个" letter="F" />
          </button>
          <button type="button" className="ml-auto h-[29px] w-[74px] border border-[#ababab] bg-[#e1e1e1]">
            关闭
          </button>
        </div>
      </div>

      <div className="h-[211px] border border-[#828790] bg-white pl-[5px]">
        <table className="table-fixed border-separate border-spacing-0 text-left text-[15px] leading-[19px] font-light">
          <thead>
            <tr className="h-[24px]">
              {RESULT_COLUMNS.map((col) => (
                <th
                  key={col.name}
                  className={`border-r border-[#e5e5e5] pt-px pr-0 pb-0 pl-[3px] align-top font-light whitespace-nowrap not-first:pl-[7px] ${col.width}`}
                >
                  {col.name}
                </th>
              ))}
            </tr>
          </thead>
          <tbody>
            {RESULTS.map((row, r) => (
              <tr
                key={row[3]}
                onClick={() => setSelected(r)}
                className={
                  r === selected
                    ? "bg-[#0078d7] text-white outline-1 -outline-offset-1 outline-dotted outline-[#ff8728]"
                    : ""
                }
              >
                {row.map((cell, c) => (
                  <td key={c} className="h-[19px] py-0 pr-0 pl-[3px] whitespace-nowrap not-first:pl-[7px]">
                    {cell}
                  </td>
                ))}
              </tr>
            ))}
          </tbody>
        </table>
      </div>

      <div className="flex h-5 items-center justify-between pb-px pl-[2px]">
        <span>3 个单元格被找到</span>
        <svg width="12" height="12" viewBox="0 0 12 12" fill="#bfbfbf">
          <path d="M8 1h2v2H8zM8 5h2v2H8zM4 5h2v2H4zM8 9h2v2H8zM4 9h2v2H4zM0 9h2v2H0z" />
        </svg>
      </div>
    </div>
  );
}

// Red pointers drawn on top of the window

const ARROWS = [
  { from: [869, 143], to: [944, 230] },
  { from: [795, 278], to: [857, 274] },
  { from: [771, 326], to: [857, 311] },
  { from: [779, 481], to: [849, 470] },
];

function Arrow({ from, to }: { from: number[]; to: number[] }) {
  const length = Math.hypot(to[0] - from[0], to[1] - from[1]);
  const angle = (Math.atan2(to[1] - from[1], to[0] - from[0]) * 180) / Math.PI;
  const base = length - 26;
  return (
    <g transform={`translate(${from[0]} ${from[1]}) rotate(${angle})`}>
      <path
        d={`M0 -1.500L${base + 4} -2L${base} -6.500L${length} 0L${base} 6.500L${base + 4} 2L0 1.500z`}
        fill="red"
      />
    </g>
  );
}

function Annotations() {
  return (
    <svg className="pointer-events-none absolute inset-0 h-full w-full">
      <g className="drop-shadow-[2px_3px_2px_rgba(0,0,0,0.5)]">
        {ARROWS.map((a) => (
          <Arrow key={a.from.join()} from={a.from} to={a.to} />
        ))}
      </g>
      <path
        d="M915.500 470.500v16l3.500-3.500 2.500 6 2.500-1-2.500-6h5z"
        fill="#fff"
        stroke="#000"
      />
    </svg>
  );
}

function Watermark() {
  return (
    <div className="pointer-events-none absolute right-[5px] bottom-2 flex items-center opacity-80">
      <svg width="44" height="42" viewBox="0 0 46 42">
        <defs>
          <linearGradient id="wm-blue" x1="0" y1="1" x2="1" y2="0">
            <stop offset="0" stopColor="#2563b0" />
            <stop offset="1" stopColor="#58b4ea" />
          </linearGradient>
          <linearGradient id="wm-green" x1="0" y1="1" x2="1" y2="0">
            <stop offset="0" stopColor="#e8dc3a" />
            <stop offset="1" stopColor="#3fae5a" />
          </linearGradient>
        </defs>
        <path d="M44 1C26-1 4 12 1 28c0 6 3 9 9 9-4-4-4-8 0-14C16 12 28 4 44 1z" fill="url(#wm-blue)" />
        <path d="M9 32c2-7 7-13 14-12 3 2 0 7-5 8 6 1 11-5 8-10-7-4-17 3-17 14z" fill="url(#wm-blue)" />
        <path d="M36 14c9 8 4 24-14 26-7 1-13 0-18-2 10 1 19-3 25-10 4-5 6-9 7-14z" fill="url(#wm-green)" />
      </svg>
      <div className="flex flex-col">
        <span className="text-[21px] leading-[26px] font-bold text-[#4a90d4]">极光下载站</span>
        <span className="font-['Liberation_Sans',sans-serif] text-[17px] leading-[17px] font-bold text-[#4fb870]">
          www.xz7.com
        </span>
      </div>
    </div>
  );
}

export default function App() {
  return (
    <div className="relative flex h-screen flex-col overflow-hidden border-x border-t border-[#808080] bg-[#e6e6e6] font-['Noto_Sans_CJK_SC',sans-serif] text-[12px] leading-4">
      <TitleBar />
      <MenuTabs />
      <Ribbon />
      <QuickAccess />
      <FormulaBar />
      <Sheet />
      <SheetTabs />
      <StatusBar />

      <FindReplaceDialog />
      <div className="absolute right-[371px] bottom-[45px] flex h-[26px] w-[61px] items-center justify-center gap-1 rounded-lg border border-[#888] bg-white text-[13px] text-[#333] shadow-md">
        CH
        <svg width="9" height="11" viewBox="0 0 9 11" fill="none" stroke="#333">
          <path d="M5 .500c4 3 4 8-1 10H1c4-2 5-5 4-10z" />
        </svg>
        简
      </div>
      <Annotations />
      <Watermark />
    </div>
  );
}
